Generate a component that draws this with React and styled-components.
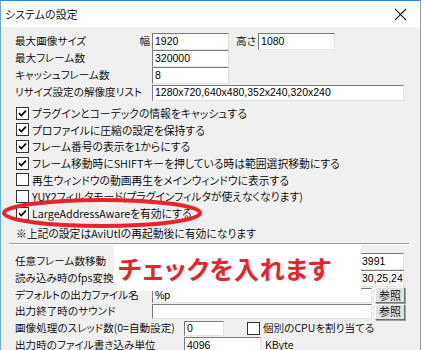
import styled, { createGlobalStyle } from "styled-components";

const GlobalStyle = createGlobalStyle`
  html, body {
    margin: 0;
    padding: 0;
    background: #ffffff;
  }
  body {
    font-family: "Noto Sans CJK JP", "Noto Sans", sans-serif;
    font-feature-settings: "palt";
  }
`;

const Window = styled.div`
  position: relative;
  width: 421px;
  height: 350px;
  box-sizing: border-box;
  overflow: hidden;
  border-top: 1px solid #2b86d8;
  border-left: 1px solid #6fa9dc;
  border-right: 1px solid #9a9a9a;
  background: #f0f0f0;
  color: #000;
`;

const TitleBar = styled.div`
  height: 26px;
  background: #ffffff;
  display: flex;
  align-items: center;
  justify-content: space-between;
  padding: 0 13px 0 4px;
  font-size: 11px;
  font-weight: 350;
`;

const Body = styled.div`
  padding: 6px 0 0 14px;
  font-size: 10.6px;
  font-weight: 350;
  line-height: 1;
`;

const FieldRow = styled.div`
  display: flex;
  align-items: center;
  height: ${(p) => p.$h || 17}px;
`;

const Label = styled.div`
  width: ${(p) => p.$w || 137}px;
  flex: none;
  display: flex;
  justify-content: space-between;
  align-items: center;
  white-space: nowrap;
`;

const Unit = styled.span`
  margin-right: 2px;
`;

const TextBox = styled.div`
  box-sizing: border-box;
  width: ${(p) => p.$w}px;
  height: ${(p) => p.$h || 17}px;
  flex: none;
  background: #ffffff;
  border: 1px solid;
  border-color: #7a7a7a #e3e3e3 #e3e3e3 #7a7a7a;
  font-family: "Liberation Sans", Arial, sans-serif;
  font-weight: 400;
  font-size: 10.5px;
  display: flex;
  align-items: center;
  padding-left: ${(p) => p.$indent || 2}px;
  white-space: nowrap;
  overflow: hidden;
`;

const InlineLabel = styled.span`
  margin: 0 2px 0 ${(p) => p.$ml || 7}px;
  white-space: nowrap;
`;

const CheckList = styled.div`
  margin-top: 4px;
  font-size: 10.8px;
`;

const CheckRow = styled.div`
  display: flex;
  align-items: center;
  gap: 3px;
  height: 16.67px;
  padding-left: ${(p) => (p.$inline ? 0 : 1)}px;
  margin-left: ${(p) => p.$ml || 0}px;
  white-space: nowrap;
`;

const Box = styled.span`
  box-sizing: border-box;
  width: 13px;
  height: 13px;
  flex: none;
  background: #ffffff;
  border: 1px solid #333333;
  display: flex;
  align-items: center;
  justify-content: center;
`;

const Note = styled.div`
  height: 17px;
  display: flex;
  align-items: center;
  margin-top: 3px;
  padding-left: 1px;
  font-size: 10.8px;
`;

const Separator = styled.div`
  width: 400px;
  margin: 1px 0 0 -6px;
  border-top: 1px solid #a0a0a0;
  border-bottom: 1px solid #ffffff;
`;

const Lower = styled.div`
  margin-top: 8px;
`;

const RefButton = styled.div`
  box-sizing: border-box;
  width: 30px;
  height: 16px;
  margin-left: 3px;
  flex: none;
  background: #e1e1e1;
  border: 1px solid;
  border-color: #ffffff #6e6e6e #6e6e6e #ffffff;
  box-shadow: 1px 1px 0 #a0a0a0;
  display: flex;
  align-items: center;
  justify-content: center;
  font-size: 11px;
`;

const Callout = styled.div`
  position: absolute;
  left: 113px;
  top: 244px;
  width: 247px;
  height: 46px;
  box-sizing: border-box;
  padding-left: 4px;
  background: #ffffff;
  display: flex;
  align-items: center;
  color: #e8232b;
  font-weight: 700;
  font-size: 25px;
  letter-spacing: 0.6px;
  white-space: nowrap;
`;

const Ring = styled.svg`
  position: absolute;
  left: 0;
  top: 195px;
`;

const Check = () => (
  <svg width="11" height="11" viewBox="0 0 11 11">
    <path d="M2 5.2 L4.3 7.6 L9 2.6" fill="none" stroke="#000" strokeWidth="1.7" />
  </svg>
);

const CheckItem = ({ checked, children, ...rest }) => (
  <CheckRow {...rest}>
    <Box>{checked && <Check />}</Box>
    <span>{children}</span>
  </CheckRow>
);

const options = [
  { text: "プラグインとコーデックの情報をキャッシュする", checked: true },
  { text: "プロファイルに圧縮の設定を保持する", checked: true },
  { text: "フレーム番号の表示を1からにする", checked: true },
  { text: "フレーム移動時にSHIFTキーを押している時は範囲選択移動にする", checked: true },
  { text: "再生ウィンドウの動画再生をメインウィンドウに表示する", checked: false },
  { text: "YUY2フィルタモード(プラグインフィルタが使えなくなります)", checked: false },
  { text: "LargeAddressAwareを有効にする", checked: true },
];

export default function App() {
  return (
    <>
      <GlobalStyle />
      <Window>
        <TitleBar>
          <span>システムの設定</span>
          <svg width="13" height="13" viewBox="0 0 13 13">
            <path d="M1 1 L12 12 M12 1 L1 12" stroke="#222" strokeWidth="1.1" />
          </svg>
        </TitleBar>
        <Body>
          <FieldRow>
            <Label>
              <span>最大画像サイズ</span>
              <Unit>幅</Unit>
            </Label>
            <TextBox $w={77}>1920</TextBox>
            <InlineLabel>高さ</InlineLabel>
            <TextBox $w={77}>1080</TextBox>
          </FieldRow>
          <FieldRow>
            <Label>最大フレーム数</Label>
            <TextBox $w={77}>320000</TextBox>
          </FieldRow>
          <FieldRow>
            <Label>キャッシュフレーム数</Label>
            <TextBox $w={77}>8</TextBox>
          </FieldRow>
          <FieldRow $h={17}>
            <Label>リサイズ設定の解像度リスト</Label>
            <TextBox $w={252} $h={16}>1280x720,640x480,352x240,320x240</TextBox>
          </FieldRow>

          <CheckList>
            {options.map((o) => (
              <CheckItem key={o.text} checked={o.checked}>
                {o.text}
              </CheckItem>
            ))}
          </CheckList>
          <Note>※上記の設定はAviUtlの再起動後に有効になります</Note>
          <Separator />

          <Lower>
            <FieldRow>
              <Label>任意フレーム数移動</Label>
              <TextBox $w={252} $indent={209}>3991</TextBox>
            </FieldRow>
            <FieldRow>
              <Label>読み込み時のfps変換</Label>
              <TextBox $w={252} $indent={206}>,30,25,24,20,15</TextBox>
            </FieldRow>
            <FieldRow $h={17}>
              <Label>デフォルトの出力ファイル名</Label>
              <TextBox $w={220} $h={15}>%p</TextBox>
              <RefButton>参照</RefButton>
            </FieldRow>
            <FieldRow $h={16}>
              <Label>出力終了時のサウンド</Label>
              <TextBox $w={220} $h={15}></TextBox>
              <RefButton>参照</RefButton>
            </FieldRow>
            <FieldRow>
              <Label $w={169}>画像処理のスレッド数(0=自動設定)</Label>
              <TextBox $w={40} $h={15}>0</TextBox>
              <CheckItem $inline $ml={23}>個別のCPUを割り当てる</CheckItem>
            </FieldRow>
            <FieldRow>
              <Label $w={169}>出力時のファイル書き込み単位</Label>
              <TextBox $w={77}>4096</TextBox>
              <InlineLabel $ml={4}>KByte</InlineLabel>
            </FieldRow>
          </Lower>
        </Body>

        <Ring width="204" height="34" viewBox="0 0 204 34">
          <ellipse cx="101" cy="17" rx="98" ry="13" fill="none" stroke="#e8232b" strokeWidth="4" />
        </Ring>
        <Callout>チェックを入れます</Callout>
      </Window>
    </>
  );
}
